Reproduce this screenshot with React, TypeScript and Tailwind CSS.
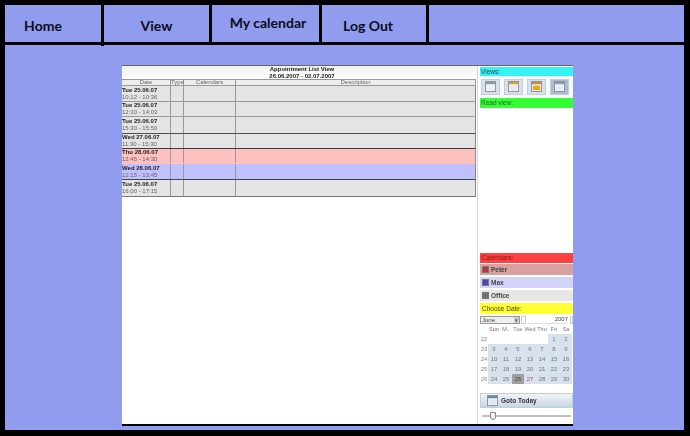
import React from "react";

const rows = [
  { d: "Tue 25.06.07", t: "10:12 - 10:36", bg: "bg-[#e4e4e4]", b: "border-b-[#999]", h: 16 },
  { d: "Tue 25.06.07", t: "12:30 - 14:03", bg: "bg-[#e4e4e4]", b: "border-b-[#999]", h: 15 },
  { d: "Tue 25.06.07", t: "15:30 - 15:50", bg: "bg-[#e4e4e4]", b: "border-b-[#4f4f4f]", h: 17 },
  { d: "Wed 27.06.07", t: "11:30 - 15:30", bg: "bg-[#e4e4e4]", b: "border-b-[#3c3c3c]", h: 15 },
  { d: "Thu 28.06.07", t: "12:45 - 14:30", bg: "bg-[#ffc0c0]", b: "border-b-[#ffc0c0]", h: 15 },
  { d: "Wed 28.06.07", t: "12:15 - 13:45", bg: "bg-[#c0c0ff]", b: "border-b-[#444]", h: 16 },
  { d: "Tue 25.06.07", t: "16:00 - 17:15", bg: "bg-[#e4e4e4]", b: "border-b-[#777]", h: 17 },
];

const weeks = [
  ["22", "", "", "", "", "", "1", "2"],
  ["23", "3", "4", "5", "6", "7", "8", "9"],
  ["24", "10", "11", "12", "13", "14", "15", "16"],
  ["25", "17", "18", "19", "20", "21", "22", "23"],
  ["26", "24", "25", "26", "27", "28", "29", "30"],
];

function ViewIcon({ color, stripe }: { color: string; stripe: string }) {
  return (
    <svg width="11" height="11" viewBox="0 0 12 12">
      <rect x="0.5" y="0.5" width="11" height="11" fill="#f2f2f2" stroke="#8090a0" />
      <rect x="1" y="1" width="10" height="2.5" fill={stripe} />
      <rect x="2" y="5" width="8" height="5" fill={color} />
    </svg>
  );
}

function NavItem({ label, className, up }: { label: string; className: string; up?: boolean }) {
  return (
    <div className={`relative flex h-full items-center justify-center border-r-[3px] border-black text-[14px] font-bold text-[#0c0c20] ${className}`}>
      <span className={up ? "-translate-y-[1px]" : "translate-y-[2px]"}>{label}</span>
    </div>
  );
}

export default function App() {
  return (
    <div className="flex h-[436px] w-[690px] flex-col overflow-hidden bg-black pt-[5px] pb-[6px] pl-[5px] pr-[6px] font-['Lato',sans-serif]">
      <nav className="flex h-[37px] shrink-0 bg-[#919cee]">
        <NavItem label="Home" className="w-[99px] pr-[20px]" />
        <NavItem label="View" className="w-[108px]" />
        <NavItem label="My calendar" className="w-[110px] pl-[5px]" up />
        <NavItem label="Log Out" className="w-[107px] pr-[12px]" />
      </nav>
      <main className="relative mt-[3px] flex flex-1 bg-[#919cee] pt-5 pb-1 pl-[117px]">
        <span className="absolute left-[96px] top-0 h-px w-[3px] bg-black" />
        <div className="flex h-[361px] w-[451px] flex-col overflow-hidden border-t border-[#666] bg-white font-['Liberation_Sans',sans-serif] text-[#444] blur-[0.5px]">
          <div className="flex min-h-0 flex-1">
            <section className="w-[355px] shrink-0">
              <div className="h-[13px] bg-gradient-to-b from-[#f0f0f0] to-white pl-[5px] text-center text-[6px] leading-[6.5px] text-[#222]">
                <div className="font-bold">Appointment List View</div>
                <div className="font-bold">26.06.2007 - 02.07.2007</div>
              </div>
              <div className="flex h-[7px] w-[354px] border-y border-r border-[#999] bg-[#eee] text-center text-[6px] leading-[5px] text-[#666]">
                <div className="w-[49px] border-r border-[#999]">Date</div>
                <div className="w-[13px] border-r border-[#999]">Type</div>
                <div className="w-[52px] border-r border-[#999]">Calendars</div>
                <div className="flex-1">Description</div>
              </div>
              {rows.map((r, i) => (
                <div key={i} style={{ height: r.h }} className={`flex w-[354px] border-b border-r border-r-[#888] ${r.b} ${r.bg} text-[6px] leading-[7px]`}>
                  <div className="flex w-[49px] flex-col justify-center whitespace-nowrap border-r border-[#999]">
                    <div className="font-bold text-[#222]">{r.d}</div>
                    <div className="text-[#666]">{r.t}</div>
                  </div>
                  <div className="w-[13px] border-r border-[#999]" />
                  <div className="w-[52px] border-r border-[#999]" />
                  <div className="flex-1" />
                </div>
              ))}
            </section>
            <aside className="flex min-w-0 flex-1 flex-col border-l border-[#d8d8d8] pl-[2px] text-[6.5px] text-[#444]">
              <div className="mt-[1px] flex h-[9px] shrink-0 items-center bg-[#36f3f3] pl-[1px] text-[#304060]">Views:</div>
              <div className="flex h-[21px] shrink-0 items-center gap-[4px] bg-[#f6f8fa] pl-[1px]">
                {[
                  ["#f0f0f0", "#8a9bb0"],
                  ["#e8e8e8", "#d8a030"],
                  ["#e8a820", "#c09040"],
                  ["#e4ecf4", "#8a9bb0"],
                ].map(([c, s], i) => (
                  <div key={i} className={`flex h-[16px] w-[19px] items-center justify-center border border-[#c4ced8] ${i === 3 ? "bg-[#aebccc]" : "bg-[#d8e0e8]"}`}>
                    <ViewIcon color={c} stripe={s} />
                  </div>
                ))}
              </div>
              <div className="mt-[1px] flex h-[10px] shrink-0 items-center bg-[#33ff33] pl-[1px] text-[#2a5a2a]">Read view:</div>
              <div className="flex-1" />
              <div className="flex h-[10px] shrink-0 items-center bg-[#ff4040] pl-[2px] text-[#7a1818]">Calendars:</div>
              <div className="mt-[1px] flex h-[11px] shrink-0 items-center gap-[2px] bg-[#d9a0a0] pl-[2px] font-bold">
                <span className="h-[7px] w-[7px] border border-[#777] bg-[#b03838]" />Peter
              </div>
              <div className="mt-[2px] flex h-[11px] shrink-0 items-center gap-[2px] bg-[#d4d4f8] pl-[2px] font-bold">
                <span className="h-[7px] w-[7px] border border-[#777] bg-[#4848c0]" />Max
              </div>
              <div className="mt-[2px] flex h-[11px] shrink-0 items-center gap-[2px] bg-[#e6e6e6] pl-[2px] font-bold">
                <span className="h-[7px] w-[7px] border border-[#777] bg-[#707070]" />Office
              </div>
              <div className="mt-[2px] flex h-[11px] shrink-0 items-center bg-[#ffff33] pl-[2px] text-[#444420]">Choose Date:</div>
              <div className="mt-[2px] flex h-[8px] shrink-0 items-center text-[6px]">
                <span className="flex h-[8px] w-[40px] items-center justify-between border border-[#999] bg-[#eee] pl-[1px]">
                  June<span className="bg-[#ccc] px-[1px] text-[5px] leading-[6px]">▾</span>
                </span>
                <span className="ml-[1px] h-[8px] w-[5px] border border-[#ccc]" />
                <span className="ml-[2px] flex h-[8px] w-[40px] items-center justify-end border-b border-[#ddd]">2007</span>
                <span className="ml-[2px] h-[8px] w-[3px] border border-[#ccc]" />
              </div>
              <div className="grid h-[60px] shrink-0 grid-cols-[8px_repeat(7,12px)] text-center text-[6px] leading-[10px] text-[#777]">
                <span />
                {["Sun", "M..", "Tue", "Wed", "Thu", "Fri", "Sa"].map((d, i) => (
                  <span key={i} className={`whitespace-nowrap text-[5.5px] ${i === 0 ? "text-[#b05050]" : ""}`}>{d}</span>
                ))}
                {weeks.flatMap((w, wi) =>
                  w.map((c, ci) => (
                    <span
                      key={`${wi}-${ci}`}
                      className={
                        ci === 0
                          ? "text-[#888]"
                          : c === "26"
                            ? "bg-[#a0a0a0] text-[#444]"
                            : c
                              ? `bg-[#d8e2ee] ${c === "27" ? "text-[#a05070]" : ""}`
                              : ""
                      }
                    >
                      {c}
                    </span>
                  )),
                )}
              </div>
              <div className="mt-[9px] flex h-[15px] shrink-0 items-center gap-[3px] border border-[#c4ced8] bg-gradient-to-b from-[#f2f5f8] to-[#c8d6e4] pl-[6px] font-bold text-[#334]">
                <ViewIcon color="#dfe8f4" stripe="#6f86a8" />
                Goto Today
              </div>
              <div className="relative mb-[4px] mt-[4px] h-[8px] shrink-0">
                <div className="absolute left-[2px] right-[2px] top-[3px] h-[2px] border border-[#c0c0c0] bg-[#eee]" />
                <div className="absolute left-[10px] top-0 h-[8px] w-[6px] rounded-b-full border border-[#888] bg-[#f4f4f4]" />
              </div>
            </aside>
          </div>
          <div className="h-[2px] shrink-0 bg-black" />
        </div>
      </main>
    </div>
  );
}
